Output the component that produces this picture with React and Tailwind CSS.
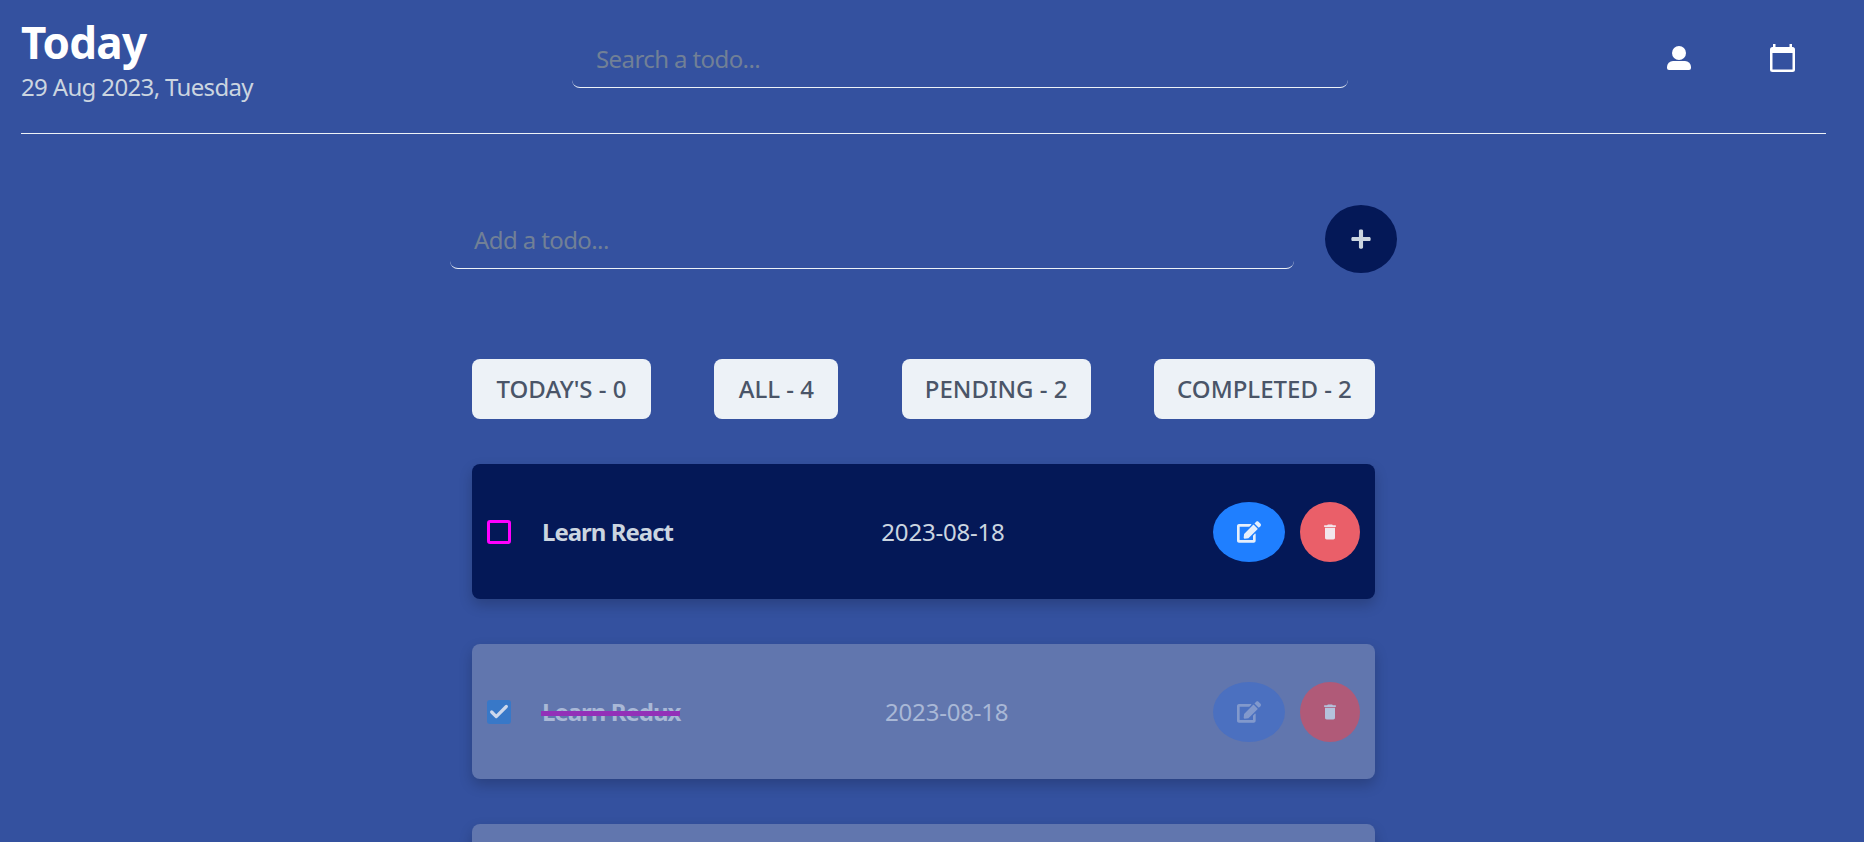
import { FaPlus, FaEdit } from "react-icons/fa";
import { MdDelete } from "react-icons/md";
import { Check } from "lucide-react";

const font = { fontFamily: '"Noto Sans", sans-serif' };

function UserIcon() {
    return (
        <svg width="24" height="24" viewBox="0 0 24 24" fill="#fff">
            <circle cx="12" cy="7" r="7" />
            <path d="M6 15h12a6 6 0 0 1 6 6v1a2 2 0 0 1-2 2H2a2 2 0 0 1-2-2v-1a6 6 0 0 1 6-6z" />
        </svg>
    );
}

function CalendarIcon() {
    return (
        <svg width="25" height="28" viewBox="0 0 25 28" fill="none">
            <rect x="0" y="3" width="25" height="25" rx="2.5" fill="#fff" />
            <rect x="2.5" y="9" width="20" height="16.5" fill="#34519f" />
            <rect x="3" y="0" width="2.5" height="4" fill="#fff" />
            <rect x="19.5" y="0" width="2.5" height="4" fill="#fff" />
        </svg>
    );
}

function Filter({ label, width }) {
    return (
        <button className={`h-[60px] rounded-lg bg-[#edf2f7] text-[#4a5568] text-2xl font-medium ${width}`}>
            {label}
        </button>
    );
}

function Todo({ title, date, done }) {
    return (
        <div className={`flex items-center justify-between h-[135px] px-[15px] rounded-lg shadow-[0_6px_14px_rgba(0,0,0,0.2)] ${done ? "bg-[#6176ae]" : "bg-[#041857]"}`}>
            <div className="flex items-center">
                {done ? (
                    <span className="flex items-center justify-center w-6 h-6 rounded-[3px] bg-[#3878c8] text-[#cdd8ec]"><Check size={22} strokeWidth={3.5} /></span>
                ) : (
                    <span className="w-6 h-6 rounded-[3px] border-[3px] border-[#f0f]" />
                )}
                <div className={`relative ml-[31px] text-2xl leading-[33px] font-bold tracking-[-1px] ${done ? "text-[#a9b8d6]" : "text-[#cbd5e0]"}`}>
                    {title}
                    {done && <span className="absolute -left-px right-0 top-[16px] h-[5px] bg-[#9330b8]" />}
                </div>
            </div>
            <div className={`text-2xl tracking-[-0.2px] ${done ? "text-[#a9b8d6]" : "text-[#cbd5e0]"}`}>{date}</div>
            <div className="flex items-center gap-[15px]">
                <button className={`flex items-center justify-center w-[72px] h-[60px] rounded-[50%] text-2xl ${done ? "bg-[#4b70c0] text-[#8299cc]" : "bg-[#1f7fff] text-[#e6effb]"}`}>
                    <FaEdit />
                </button>
                <button className={`flex items-center justify-center w-[60px] h-[60px] rounded-[50%] text-xl ${done ? "bg-[#b05a78] text-[#b4c2dc]" : "bg-[#ea5f69] text-[#f2e6ec]"}`}>
                    <MdDelete />
                </button>
            </div>
        </div>
    );
}

export default function App() {
    return (
        <div className="h-[842px] overflow-hidden bg-[#34519f] pl-[21px] pr-[38px]" style={font}>
            <header className="flex items-start h-[134px] border-b border-[#edf2f7]">
                <div className="w-[551px] pt-[12px]">
                    <h1 className="text-[44px] leading-[60px] font-bold tracking-[-0.75px] text-white">Today</h1>
                    <p className="text-2xl leading-[30px] tracking-[-0.65px] text-[#cbd5e0]">29 Aug 2023, Tuesday</p>
                </div>
                <input
                    placeholder="Search a todo..."
                    className="w-[776px] h-[60px] mt-[28px] px-6 pt-[2px] text-2xl tracking-[-0.6px] bg-transparent border-b border-[#edf2f7] rounded-lg outline-none placeholder:text-[#718096]"
                />
                <div className="flex items-start ml-[319px] pt-[44px] gap-[79px]">
                    <div className="mt-[2px]"><UserIcon /></div>
                    <CalendarIcon />
                </div>
            </header>

            <main className="ml-[429px] w-[947px]">
                <div className="flex items-center mt-[71px]">
                    <input
                        placeholder="Add a todo..."
                        className="w-[844px] h-[60px] px-6 pt-[2px] text-2xl tracking-[-0.6px] bg-transparent border-b border-[#edf2f7] rounded-lg outline-none placeholder:text-[#718096]"
                    />
                    <button className="flex items-center justify-center w-[72px] h-[68px] ml-[31px] rounded-[50%] bg-[#041857] text-[#cbd5e0] text-[22px]">
                        <FaPlus />
                    </button>
                </div>
                <div className="ml-[22px] w-[903px]">
                    <div className="flex justify-between mt-[86px]">
                        <Filter label="TODAY'S - 0" width="w-[179px]" />
                        <Filter label="ALL - 4" width="w-[124px]" />
                        <Filter label="PENDING - 2" width="w-[189px]" />
                        <Filter label="COMPLETED - 2" width="w-[221px]" />
                    </div>
                    <div className="flex flex-col gap-[45px] mt-[45px]">
                        <Todo title="Learn React" date="2023-08-18" />
                        <Todo title="Learn Redux" date="2023-08-18" done />
                        {/* third row only shows its top edge in the viewport */}
                        <div className="h-[135px] rounded-lg shadow-[0_6px_14px_rgba(0,0,0,0.2)] bg-[#6176ae]" />
                    </div>
                </div>
            </main>
        </div>
    );
}
